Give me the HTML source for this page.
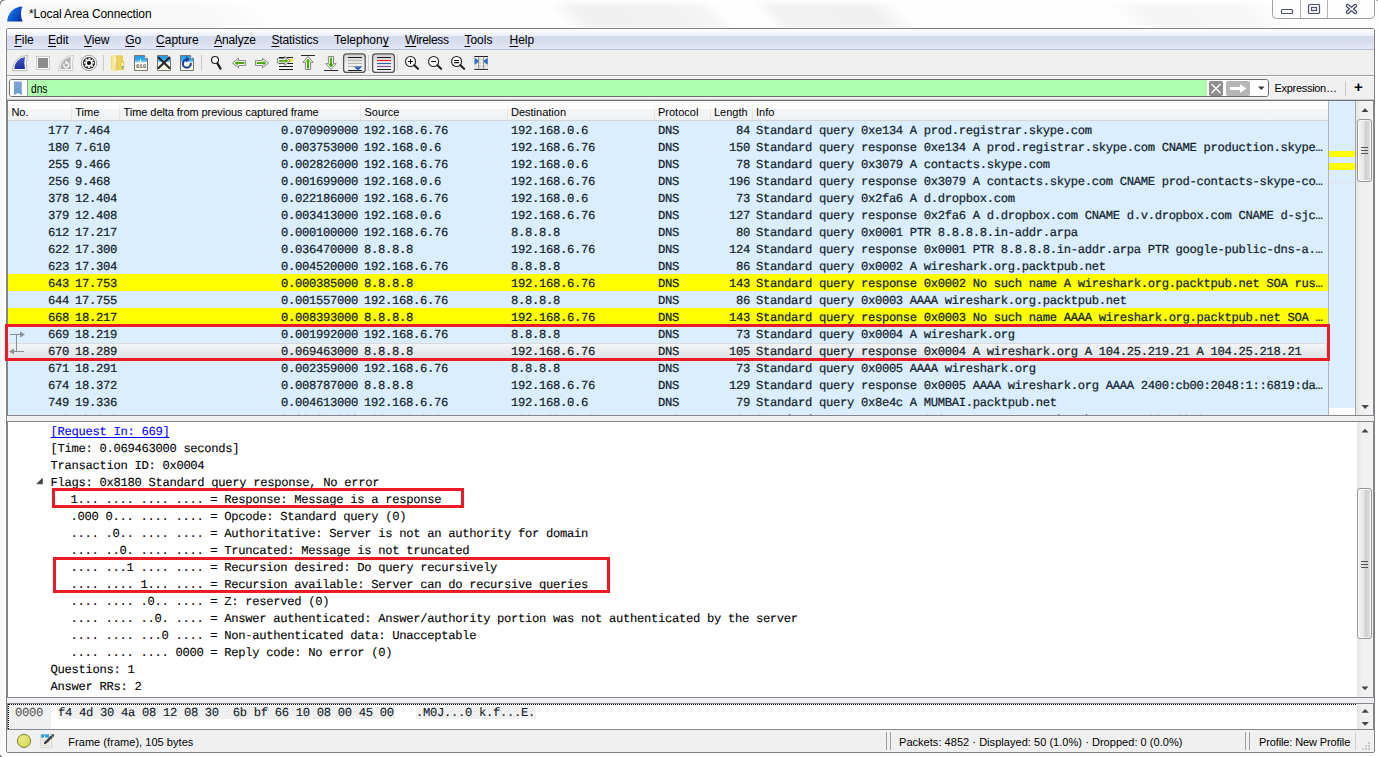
<!DOCTYPE html><html><head><meta charset="utf-8"><title>*Local Area Connection</title><style>
html,body{margin:0;padding:0}
body{width:1378px;height:757px;overflow:hidden;background:#fcfcfc;font-family:"Liberation Sans",sans-serif;font-size:11px;color:#000}
#win{position:absolute;left:0;top:0;width:1378px;height:757px;overflow:hidden;background:linear-gradient(90deg,#f6f6f6 0,#fafafa 4px,#fff 6px,#fff 100%)}
#win div,#win span,#win svg{position:absolute}
#titlebar{left:0;top:0;width:1378px;height:28px;background:#fefefe;overflow:hidden}
#streaks{left:-40px;top:0;width:1460px;height:28px;transform:skewX(45deg);transform-origin:0 0;background:linear-gradient(90deg,rgba(0,0,0,.022) 0,rgba(0,0,0,.022) 230px,rgba(0,0,0,0) 300px,rgba(0,0,0,0) 583px,rgba(0,0,0,.055) 608px,rgba(0,0,0,.05) 700px,rgba(0,0,0,.03) 735px,rgba(0,0,0,0) 752px,rgba(0,0,0,0) 785px,rgba(0,0,0,.05) 805px,rgba(0,0,0,.055) 900px,rgba(0,0,0,0) 935px,rgba(0,0,0,0) 1140px,rgba(0,0,0,.035) 1175px,rgba(0,0,0,.03) 1270px,rgba(0,0,0,0) 1310px)}
#tfade{left:0;top:0;width:1378px;height:8px;background:linear-gradient(rgba(255,255,255,.9),rgba(255,255,255,0))}
#corners{left:-1px;top:-1px;width:1378px;height:757px;border:1px solid #3c3c3c;border-radius:7px 3px 0 4px;pointer-events:none}
#title{left:28.9px;top:6.5px;letter-spacing:-0.13px;font-size:12px;line-height:15px;white-space:pre;color:#000}
#frame{left:6px;top:28px;width:1369px;height:725px;border:1px solid #828282;border-radius:2px;box-sizing:border-box;background:#f0f0f0;box-shadow:0 0 0 1px rgba(255,255,255,.9)}
#menubar{left:7px;top:29px;width:1367px;height:20px;background:linear-gradient(#ffffff 0,#eceff9 34%,#d5daec 36%,#d8ddee 60%,#e2e6f5 100%);border-bottom:1px solid #b8bfd6}
.mi{top:33px;margin-left:-0.8px;font-size:12px;line-height:14px;white-space:pre;color:#000}
.mi u{text-decoration:underline;text-underline-offset:1.5px;text-decoration-thickness:1px}
#toolbar{left:7px;top:50px;width:1367px;height:25px;background:#f0f0f0;border-bottom:1px solid #a0a0a0}
#tbhl{left:7px;top:76px;width:1367px;height:1px;background:#fafafa}
#filterbox{left:9px;top:79px;width:1258px;height:16px;border:1px solid #6e6e6e;border-radius:3px;background:linear-gradient(90deg,#fff 17px,#afffaf 17px,#afffaf 1197px,#fff 1197px);overflow:hidden}
#fbm{left:0;top:0;width:17px;height:16px;background:#fff;border-right:1px solid #9a9a9a}
#ftext{left:21px;top:1.500px;font-size:12.300px;line-height:15px;white-space:pre;transform:scaleX(.83);transform-origin:0 0}
#fright{left:1197px;top:0;width:61px;height:16px;background:#fff}
#fx{left:1209px;top:81px;width:14px;height:15px;background:#8e8e8e;border-radius:2px}
#fgo{left:1226px;top:81px;width:24px;height:15px;background:#b6b6b6;border-radius:2px}
#expr{left:1274.5px;top:81px;font-size:11px;letter-spacing:-0.3px;line-height:14px;white-space:pre}
#fsep{left:1345px;top:81px;width:1px;height:15px;background:#c8c8c8}
#fplus{left:1354px;top:78px;font-size:15px;font-weight:bold;line-height:18px}
/* packet list */
#plwrap{left:7px;top:100px;width:1367px;height:316px;background:#daeeff;border:1px solid #828790;border-top-color:#6d7278;box-shadow:0 -1px 0 #c9cbce;box-sizing:border-box}
#phead{left:8px;top:101px;width:1320px;height:19px;background:linear-gradient(#fff 0,#fff 42%,#f4f5f7 43%,#f1f2f4 100%);border-bottom:1px solid #d5d5d5}
.hc{top:106px;font-size:11px;line-height:13px;white-space:pre}
.hs{top:101px;width:1px;height:19px;background:linear-gradient(#fafafa,#dcdcdc)}
#plist{left:8px;top:121px;width:1320px;height:294px;overflow:hidden;background:#daeeff}
.row{left:0;width:1320px;height:17px;background:#daeeff}
.row.yel{background:#ffff00}
.row.sel{background:#daeeff}
.row.sel::before{content:"";position:absolute;left:0;top:1px;width:1319px;height:16px;background:linear-gradient(#f5f6f8,#dde0e5);box-shadow:inset 0 0 0 1px #d9dbdf;border-radius:2px}
.c,.dl2,.hx{font-family:"Liberation Mono",monospace;font-size:12.2px;letter-spacing:-0.32px;line-height:17px;white-space:pre;top:2px;color:#10222a;-webkit-text-stroke-width:0.22px;text-rendering:geometricPrecision}
.no{left:0;width:61px;text-align:right}
.tm{left:67px}
.dl{left:111px;width:239px;text-align:right}
.sr{left:356px}
.ds{left:503px}
.pr{left:650px}
.ln{left:702px;width:40px;text-align:right}
.inf{left:748px}
#mm{left:1328px;top:101px;width:28px;height:314px;background:#daeeff;border-left:1px solid #b4b4b4;border-right:1px solid #a8a8a8;box-sizing:border-box}
.mmy{left:1329px;width:26px;background:#ffff00}
.sb{left:1356px;width:17px;background:linear-gradient(90deg,#e4e4e4,#f0f0f0 30%,#f2f2f2)}
.thumb{left:1357px;width:15px;border:1px solid #979797;border-radius:3px;box-sizing:border-box;background:linear-gradient(90deg,#f4f4f4 0,#e6e6e6 45%,#cfcfcf 55%,#dedede 100%);box-shadow:inset 0 0 0 1px rgba(255,255,255,.7)}
/* detail */
#dwrap{left:7px;top:421px;width:1367px;height:277px;background:#fff;border:1px solid #828790;box-sizing:border-box}
#detail{left:8px;top:422px;width:1348px;height:275px;overflow:hidden;background:#fff}
.dl2{color:#000;-webkit-text-stroke-width:0.1px}
.hx{-webkit-text-stroke-width:0.12px}
.k{position:static!important}
.lnk{position:static!important;color:#0000ff;text-decoration:underline;text-underline-offset:2px;text-decoration-skip-ink:none;text-decoration-thickness:1px}
/* hex */
#hwrap{left:7px;top:703px;width:1367px;height:27px;background:#fff;border:1px solid #828790;box-sizing:border-box}
#hfocus{left:8px;top:704px;width:1347px;height:24px;border:1px dotted #000;border-right:none;border-bottom:none}
#hoff{left:9px;top:705px;width:42px;height:24px;background:#f0f0f0}
.hx{top:705px;line-height:16px}
#status{left:7px;top:730px;width:1367px;height:22px;background:#f0f0f0}
.st{top:736px;font-size:11px;letter-spacing:0.04px;line-height:13px;white-space:pre}
.ssep{top:732px;width:1px;height:18px;background:#a0a0a0}

.lastshift .c{-webkit-text-stroke-width:0;top:2.3px}

</style></head><body><div id="win">
<div id="titlebar"><div id="streaks"></div><div id="tfade"></div></div><div id="corners"></div>
<svg id="appicon" style="left:6px;top:5px" width="19" height="18" viewBox="6 5 19 18"><defs><linearGradient id="gfin" x1="0" y1="0" x2="1" y2="0.6"><stop offset="0" stop-color="#3a88ee"/><stop offset=".5" stop-color="#0c60d8"/><stop offset="1" stop-color="#0a34aa"/></linearGradient></defs><path d="M7.200,21.600 A15.300,15.300 0 0 1 22.400,6.500 Q19.300,14 22.700,21.600 Z" fill="url(#gfin)"/></svg>
<div id="title">*Local Area Connection</div>
<svg id="winbtns" style="left:1270px;top:0" width="108" height="22" viewBox="1270 0 108 22">
 <path d="M1272.5,-1 V14.5 Q1272.5,18.5 1276.5,18.5 H1370.5 Q1374.5,18.5 1374.5,14.5 V-1" fill="#fdfdfd" stroke="#9c9c9c" stroke-width="1"/>
 <path d="M1300.5,0 V18 M1327.5,0 V18" stroke="#b4b4b4" stroke-width="1"/>
 <rect x="1281.5" y="9.500" width="11" height="4" rx="1" fill="#fff" stroke="#4d5166" stroke-width="1.2"/>
 <rect x="1308.500" y="4.500" width="11" height="9" rx="1" fill="#fff" stroke="#4d5166" stroke-width="1.2"/>
 <rect x="1311.500" y="7.500" width="5" height="3" fill="#fff" stroke="#4d5166" stroke-width="1.2"/>
 <path d="M1347.700,5.700 L1355.300,12.300 M1355.300,5.700 L1347.700,12.300" stroke="#454a64" stroke-width="3.800" stroke-linecap="round" fill="none"/>
 <path d="M1347.700,5.700 L1355.300,12.300 M1355.300,5.700 L1347.700,12.300" stroke="#f4f4f6" stroke-width="1.500" stroke-linecap="round" fill="none"/>
</svg>
<div id="frame"></div>
<div id="menubar"></div>
<div class="mi" style="left:15.200px"><u>F</u>ile</div>
<div class="mi" style="left:48.800px"><u>E</u>dit</div>
<div class="mi" style="left:84.900px;letter-spacing:-0.2px"><u>V</u>iew</div>
<div class="mi" style="left:126px"><u>G</u>o</div>
<div class="mi" style="left:156.900px"><u>C</u>apture</div>
<div class="mi" style="left:215px;letter-spacing:-0.15px"><u>A</u>nalyze</div>
<div class="mi" style="left:272.200px;letter-spacing:-0.1px"><u>S</u>tatistics</div>
<div class="mi" style="left:334.800px">Telephon<u>y</u></div>
<div class="mi" style="left:405.900px;letter-spacing:-0.3px"><u>W</u>ireless</div>
<div class="mi" style="left:465.200px"><u>T</u>ools</div>
<div class="mi" style="left:510.300px"><u>H</u>elp</div>
<div id="toolbar"></div>
<div id="tbhl"></div>
<svg id="tbicons" style="left:0;top:50px" width="500" height="26" viewBox="0 50 500 26">
 <defs>
  <linearGradient id="gblue" x1="0" y1="0" x2="0.3" y2="1"><stop offset="0" stop-color="#4566d6"/><stop offset="1" stop-color="#1a2fa4"/></linearGradient>
  <linearGradient id="gfold" x1="0" y1="0" x2="1" y2="0"><stop offset="0" stop-color="#d2b345"/><stop offset=".25" stop-color="#efd568"/><stop offset="1" stop-color="#e7c64e"/></linearGradient><linearGradient id="gfold2" x1="0" y1="0" x2="1" y2="0"><stop offset="0" stop-color="#edd66e"/><stop offset=".4" stop-color="#f8eea6"/><stop offset="1" stop-color="#efd872"/></linearGradient>
  <linearGradient id="gdoc" x1="0" y1="0" x2="0" y2="1"><stop offset="0" stop-color="#1d9cec"/><stop offset=".3" stop-color="#3aa8ee"/><stop offset=".42" stop-color="#8fcdf4"/><stop offset=".48" stop-color="#f8f8f0"/><stop offset="1" stop-color="#fafae6"/></linearGradient>
  <linearGradient id="ggrn" x1="0" y1="0" x2="0" y2="1"><stop offset="0" stop-color="#5cba10"/><stop offset="1" stop-color="#3c9c00"/></linearGradient>
  <linearGradient id="gbtn" x1="0" y1="0" x2="0" y2="1"><stop offset="0" stop-color="#cfcfcf"/><stop offset=".5" stop-color="#ececec"/><stop offset="1" stop-color="#f6f6f6"/></linearGradient>
 </defs>
 <!-- start capture fin -->
 <path d="M12.300,70.600 A15.400,15.400 0 0 1 27.600,55.300 Q25.400,62.500 27,70.600 Z" fill="#fbfbfb" stroke="#b4b4ae" stroke-width=".9" stroke-linejoin="round"/>
 <path d="M14.300,69.100 A12.300,12.300 0 0 1 25,56.900 Q23.500,63 25,69.100 Z" fill="url(#gblue)"/>
 <!-- stop -->
 <rect x="36.400" y="56.400" width="13.200" height="13.200" fill="#fafafa" stroke="#c4c4c4" stroke-width=".8"/>
 <rect x="38" y="58" width="10" height="10" fill="#8c8c8c"/>
 <!-- restart fin grey -->
 <path d="M58.300,70.600 A15.400,15.400 0 0 1 73.600,55.300 Q71.400,62.500 73,70.600 Z" fill="#f6f6f6" stroke="#c6c6c6" stroke-width=".9" stroke-linejoin="round"/>
 <path d="M60.300,69.100 A12.300,12.300 0 0 1 71,56.900 Q69.500,63 71,69.100 Z" fill="#b2b2b2"/>
 <path d="M64.200,63.600 A2.500,2.500 0 1 0 67.400,62.900" fill="none" stroke="#fafafa" stroke-width="1.300"/>
 <path d="M65.400,60.600 L68.400,62.600 L65.400,64.400 Z" fill="#fafafa"/>
 <!-- options gear -->
 <circle cx="89" cy="63" r="7.700" fill="#fdfdfd" stroke="#8c8c8c" stroke-width=".8"/>
 <circle cx="89" cy="63" r="6.100" fill="#2b2b2b"/>
 <circle cx="89" cy="63" r="4.300" fill="none" stroke="#f6f6f6" stroke-width="1.700" stroke-dasharray="1.800 1.577" transform="rotate(-14 89 63)"/>
 <circle cx="89" cy="63" r="3.700" fill="#f6f6f6"/>
 <circle cx="89" cy="63" r="2.100" fill="#0c0c0c"/>
 <path d="M103.500,55 V71" stroke="#c9c9c9" stroke-width="1"/>
 <!-- open folder -->
 <path d="M116.400,55.300 H122.300 Q123,55.300 123,56 V61.200 H123.600 Q124.200,61.200 124.200,61.900 V69.400 Q124.200,70 123.600,70 H116.400 Z" fill="url(#gfold)"/>
 <path d="M111.600,55.200 H116 Q116.600,55.200 116.600,55.800 V70.300 Q116.600,70.900 116,70.900 L114,70.900 Q111,70.600 111,69.600 V55.800 Q111,55.200 111.600,55.200 Z" fill="url(#gfold2)"/>
 <rect x="114.500" y="56.300" width="1.100" height="6.500" fill="#fffef0" opacity=".9"/>
 <rect x="121.900" y="63" width="1.300" height="3.200" fill="#fff"/><rect x="121.900" y="66.200" width="1.300" height="1.800" fill="#2aa0e6"/>
 <!-- save doc -->
 <g id="doc1"><path d="M134.500,55.500 H144.500 L147.500,58.500 V70.500 H134.500 Z" fill="url(#gdoc)" stroke="#77776f" stroke-width="1"/><path d="M144.500,55.500 V58.500 H147.500" fill="#fff" stroke="#75756c" stroke-width=".7"/></g>
 <path d="M139.500,61.800 L140.600,58.200 L141.200,61.800 Z" fill="#fff"/><text x="135.900" y="68.200" font-family="Liberation Mono,monospace" font-weight="bold" font-size="5.800" fill="#5e5e5e" textLength="10.200" lengthAdjust="spacingAndGlyphs">010</text>
 <!-- close doc -->
 <g transform="translate(23,0)"><path d="M134.500,55.500 H144.500 L147.500,58.500 V70.500 H134.500 Z" fill="url(#gdoc)" stroke="#77776f" stroke-width="1"/><path d="M144.500,55.500 V58.500 H147.500" fill="#fff" stroke="#75756c" stroke-width=".7"/></g>
 <path d="M158.600,57.500 L169.400,67.900 M169.400,57.500 L158.600,67.900" stroke="#262626" stroke-width="2.100" stroke-linecap="round"/>
 <!-- reload doc -->
 <g transform="translate(46,0)"><path d="M134.500,55.500 H144.500 L147.500,58.500 V70.500 H134.500 Z" fill="url(#gdoc)" stroke="#77776f" stroke-width="1"/><path d="M144.500,55.500 V58.500 H147.500" fill="#fff" stroke="#75756c" stroke-width=".7"/></g>
 <path d="M186.600,59.600 A4,4 0 1 0 190.800,63.700" fill="none" stroke="#1b4394" stroke-width="2.100" stroke-linecap="round"/>
 <path d="M186.200,56.700 L189.600,59.300 L186.200,61.900 Z" fill="#1b4394" stroke="#1b4394" stroke-width=".5" stroke-linejoin="round"/>
 <path d="M201.500,55 V71" stroke="#c9c9c9" stroke-width="1"/>
 <!-- find -->
 <circle cx="215" cy="60" r="3.500" fill="#f7f7f7" stroke="#222" stroke-width="1.200"/>
 <path d="M217.400,63.400 L220.500,68.600" stroke="#222" stroke-width="2.300" stroke-linecap="round"/>
 <!-- back -->
 <path d="M232.500,63 L238.500,58.300 V60.600 H245.600 V65.400 H238.500 V67.700 Z" fill="#fff" stroke="#838383" stroke-width="1" stroke-linejoin="round"/>
 <path d="M234.600,63 L237.600,60.600 V62 H244.400 V64 H237.600 V65.400 Z" fill="url(#ggrn)"/>
 <!-- forward -->
 <path d="M268.500,63 L262.500,58.300 V60.600 H255.400 V65.400 H262.500 V67.700 Z" fill="#fff" stroke="#838383" stroke-width="1" stroke-linejoin="round"/>
 <path d="M266.400,63 L263.400,60.600 V62 H256.600 V64 H263.400 V65.400 Z" fill="url(#ggrn)"/>
 <!-- goto -->
 <path d="M279,57.500 H293 M279,63.500 H293 M279,66.500 H293 M279,69.500 H293" stroke="#1a1a1a" stroke-width="1"/>
 <rect x="288" y="59" width="5" height="2.800" fill="#ffe030"/>
 <path d="M290.400,60.800 L284.800,56.400 V58.500 H277.400 V63.100 H284.800 V65.200 Z" fill="#fff" stroke="#838383" stroke-width="1" stroke-linejoin="round"/>
 <path d="M288.400,60.800 L285.600,58.600 V59.900 H278.800 V61.700 H285.600 V63 Z" fill="url(#ggrn)"/>
 <!-- first -->
 <path d="M301,55.500 H315" stroke="#2a2a2a" stroke-width="1"/>
 <path d="M308,56.500 L313.200,62.300 H310.600 V69.500 H305.400 V62.300 H302.800 Z" fill="#fff" stroke="#838383" stroke-width="1" stroke-linejoin="round"/>
 <path d="M308,58.600 L310.800,61.800 H309.100 V68.400 H306.900 V61.800 H305.200 Z" fill="url(#ggrn)"/>
 <!-- last -->
 <path d="M324,70.500 H338" stroke="#2a2a2a" stroke-width="1"/>
 <path d="M331,69.500 L336.200,63.700 H333.600 V56.500 H328.400 V63.700 H325.800 Z" fill="#fff" stroke="#838383" stroke-width="1" stroke-linejoin="round"/>
 <path d="M331,67.400 L333.800,64.200 H332.100 V57.600 H329.900 V64.200 H328.200 Z" fill="url(#ggrn)"/>
 <!-- autoscroll (pressed) -->
 <rect x="343.600" y="53.800" width="21.600" height="18.600" rx="3" fill="url(#gbtn)" stroke="#555" stroke-width="1.300"/>
 <path d="M348,57.500 H362" stroke="#1a1a1a" stroke-width="1"/>
 <path d="M348,60.500 H362 M348,63.500 H362 M348,66.500 H362" stroke="#b4b8a8" stroke-width="1"/>
 <path d="M348,70.500 H362" stroke="#1a1a1a" stroke-width="1"/>
 <path d="M353.800,66.400 H362.200 L358,70.800 Z" fill="#3568b2"/>
 <path d="M368.500,55 V71" stroke="#d0d0d0" stroke-width="1"/>
 <!-- colorize (pressed) -->
 <rect x="372.600" y="53.800" width="21.800" height="18.600" rx="3" fill="url(#gbtn)" stroke="#555" stroke-width="1.300"/>
 <path d="M377,57.500 H391 M377,69.500 H391" stroke="#1a1a1a" stroke-width="1"/>
 <path d="M377,60.500 H391" stroke="#ee1c24" stroke-width="1.100"/>
 <path d="M377,63.500 H391" stroke="#2f62b4" stroke-width="1.100"/>
 <path d="M377,66.500 H391" stroke="#7a4a8e" stroke-width="1.100"/>
 <path d="M397.500,55 V71" stroke="#d0d0d0" stroke-width="1"/>
 <!-- zoom in -->
 <g id="zm"><circle cx="410.500" cy="61.500" r="5" fill="#fcfcfc" stroke="#222" stroke-width="1.100"/><path d="M414.300,65.300 L418,68.800" stroke="#222" stroke-width="2.200" stroke-linecap="round"/></g>
 <path d="M408,61.500 H413 M410.500,59 V64" stroke="#111" stroke-width="1.100"/>
 <g transform="translate(23.100,0)"><circle cx="410.500" cy="61.500" r="5" fill="#fcfcfc" stroke="#222" stroke-width="1.100"/><path d="M414.300,65.300 L418,68.800" stroke="#222" stroke-width="2.200" stroke-linecap="round"/></g>
 <path d="M431.100,61.500 H436.100" stroke="#111" stroke-width="1.100"/>
 <g transform="translate(46.100,0)"><circle cx="410.500" cy="61.500" r="5" fill="#fcfcfc" stroke="#222" stroke-width="1.100"/><path d="M414.300,65.300 L418,68.800" stroke="#222" stroke-width="2.200" stroke-linecap="round"/></g>
 <path d="M454.100,60.500 H459.100 M454.100,62.600 H459.100" stroke="#111" stroke-width="1.100"/>
 <!-- resize columns -->
 <path d="M474.300,56.500 H488 M474.300,69.400 H488" stroke="#1a1a1a" stroke-width="1"/>
 <path d="M474.300,59.800 H488 M474.300,63 H488 M474.300,66.200 H488" stroke="#c4c8b8" stroke-width=".8"/>
 <path d="M478.700,56.500 V69.400 M483.600,56.500 V69.400" stroke="#8a8a80" stroke-width=".9"/>
 <path d="M474.500,57.600 L479.100,61.300 L474.500,65 Z M487.800,57.600 L483.200,61.300 L487.800,65 Z" fill="#2f6fc0"/>
</svg>
<!-- filter bar -->
<div id="filterbox"><div id="fbm"></div><div id="ftext">dns</div><div id="fright"></div></div>
<svg style="left:10px;top:79px" width="20" height="18" viewBox="0 0 20 18"><defs><linearGradient id="gbm" x1="0" y1="0" x2="0" y2="1"><stop offset="0" stop-color="#7ba7da"/><stop offset="1" stop-color="#6c9bd0"/></linearGradient></defs><path d="M4,2.500 H11.800 V16 L7.900,13.900 L4,16 Z" fill="url(#gbm)"/></svg>
<div id="fx"></div><div id="fgo"></div>
<svg style="left:1206px;top:78px" width="64" height="20" viewBox="1206 78 64 20">
 <path d="M1211.500,84 L1220.500,93 M1220.500,84 L1211.500,93" stroke="#fff" stroke-width="1.300"/>
 <path d="M1230,87 H1240 V84 L1246.500,88.500 L1240,93 V90 H1230 Z" fill="#fff"/>
 <path d="M1258,86.500 H1264.600 L1261.300,90 Z" fill="#3c3c3c"/>
</svg>
<div id="expr">Expression…</div>
<div id="fsep"></div>
<div id="fplus">+</div>
<!-- packet list -->
<div id="plwrap"></div>
<div id="phead"></div>
<div class="hc" style="left:11.400px">No.</div>
<div class="hc" style="left:75.300px">Time</div>
<div class="hc" style="left:123.600px;letter-spacing:-0.07px">Time delta from previous captured frame</div>
<div class="hc" style="left:364.500px">Source</div>
<div class="hc" style="left:511px">Destination</div>
<div class="hc" style="left:658px">Protocol</div>
<div class="hc" style="left:714px">Length</div>
<div class="hc" style="left:756px">Info</div>
<div class="hs" style="left:71px"></div><div class="hs" style="left:119px"></div><div class="hs" style="left:360px"></div><div class="hs" style="left:507px"></div><div class="hs" style="left:654px"></div><div class="hs" style="left:710px"></div><div class="hs" style="left:752px"></div>

<div id="plist">
<div class="row" style="top:0px"><span class="c no">177</span><span class="c tm">7.464</span><span class="c dl">0.070909000</span><span class="c sr">192.168.6.76</span><span class="c ds">192.168.0.6</span><span class="c pr">DNS</span><span class="c ln">84</span><span class="c inf">Standard query 0xe134 A prod.registrar.skype.com</span></div>
<div class="row" style="top:17px"><span class="c no">180</span><span class="c tm">7.610</span><span class="c dl">0.003753000</span><span class="c sr">192.168.0.6</span><span class="c ds">192.168.6.76</span><span class="c pr">DNS</span><span class="c ln">150</span><span class="c inf">Standard query response 0xe134 A prod.registrar.skype.com CNAME production.skype…</span></div>
<div class="row" style="top:34px"><span class="c no">255</span><span class="c tm">9.466</span><span class="c dl">0.002826000</span><span class="c sr">192.168.6.76</span><span class="c ds">192.168.0.6</span><span class="c pr">DNS</span><span class="c ln">78</span><span class="c inf">Standard query 0x3079 A contacts.skype.com</span></div>
<div class="row" style="top:51px"><span class="c no">256</span><span class="c tm">9.468</span><span class="c dl">0.001699000</span><span class="c sr">192.168.0.6</span><span class="c ds">192.168.6.76</span><span class="c pr">DNS</span><span class="c ln">196</span><span class="c inf">Standard query response 0x3079 A contacts.skype.com CNAME prod-contacts-skype-co…</span></div>
<div class="row" style="top:68px"><span class="c no">378</span><span class="c tm">12.404</span><span class="c dl">0.022186000</span><span class="c sr">192.168.6.76</span><span class="c ds">192.168.0.6</span><span class="c pr">DNS</span><span class="c ln">73</span><span class="c inf">Standard query 0x2fa6 A d.dropbox.com</span></div>
<div class="row" style="top:85px"><span class="c no">379</span><span class="c tm">12.408</span><span class="c dl">0.003413000</span><span class="c sr">192.168.0.6</span><span class="c ds">192.168.6.76</span><span class="c pr">DNS</span><span class="c ln">127</span><span class="c inf">Standard query response 0x2fa6 A d.dropbox.com CNAME d.v.dropbox.com CNAME d-sjc…</span></div>
<div class="row" style="top:102px"><span class="c no">612</span><span class="c tm">17.217</span><span class="c dl">0.000100000</span><span class="c sr">192.168.6.76</span><span class="c ds">8.8.8.8</span><span class="c pr">DNS</span><span class="c ln">80</span><span class="c inf">Standard query 0x0001 PTR 8.8.8.8.in-addr.arpa</span></div>
<div class="row" style="top:119px"><span class="c no">622</span><span class="c tm">17.300</span><span class="c dl">0.036470000</span><span class="c sr">8.8.8.8</span><span class="c ds">192.168.6.76</span><span class="c pr">DNS</span><span class="c ln">124</span><span class="c inf">Standard query response 0x0001 PTR 8.8.8.8.in-addr.arpa PTR google-public-dns-a.…</span></div>
<div class="row" style="top:136px"><span class="c no">623</span><span class="c tm">17.304</span><span class="c dl">0.004520000</span><span class="c sr">192.168.6.76</span><span class="c ds">8.8.8.8</span><span class="c pr">DNS</span><span class="c ln">86</span><span class="c inf">Standard query 0x0002 A wireshark.org.packtpub.net</span></div>
<div class="row yel" style="top:153px"><span class="c no">643</span><span class="c tm">17.753</span><span class="c dl">0.000385000</span><span class="c sr">8.8.8.8</span><span class="c ds">192.168.6.76</span><span class="c pr">DNS</span><span class="c ln">143</span><span class="c inf">Standard query response 0x0002 No such name A wireshark.org.packtpub.net SOA rus…</span></div>
<div class="row" style="top:170px"><span class="c no">644</span><span class="c tm">17.755</span><span class="c dl">0.001557000</span><span class="c sr">192.168.6.76</span><span class="c ds">8.8.8.8</span><span class="c pr">DNS</span><span class="c ln">86</span><span class="c inf">Standard query 0x0003 AAAA wireshark.org.packtpub.net</span></div>
<div class="row yel" style="top:187px"><span class="c no">668</span><span class="c tm">18.217</span><span class="c dl">0.008393000</span><span class="c sr">8.8.8.8</span><span class="c ds">192.168.6.76</span><span class="c pr">DNS</span><span class="c ln">143</span><span class="c inf">Standard query response 0x0003 No such name AAAA wireshark.org.packtpub.net SOA …</span></div>
<div class="row" style="top:204px"><span class="c no">669</span><span class="c tm">18.219</span><span class="c dl">0.001992000</span><span class="c sr">192.168.6.76</span><span class="c ds">8.8.8.8</span><span class="c pr">DNS</span><span class="c ln">73</span><span class="c inf">Standard query 0x0004 A wireshark.org</span></div>
<div class="row sel" style="top:221px"><span class="c no">670</span><span class="c tm">18.289</span><span class="c dl">0.069463000</span><span class="c sr">8.8.8.8</span><span class="c ds">192.168.6.76</span><span class="c pr">DNS</span><span class="c ln">105</span><span class="c inf">Standard query response 0x0004 A wireshark.org A 104.25.219.21 A 104.25.218.21</span></div>
<div class="row" style="top:238px"><span class="c no">671</span><span class="c tm">18.291</span><span class="c dl">0.002359000</span><span class="c sr">192.168.6.76</span><span class="c ds">8.8.8.8</span><span class="c pr">DNS</span><span class="c ln">73</span><span class="c inf">Standard query 0x0005 AAAA wireshark.org</span></div>
<div class="row" style="top:255px"><span class="c no">674</span><span class="c tm">18.372</span><span class="c dl">0.008787000</span><span class="c sr">8.8.8.8</span><span class="c ds">192.168.6.76</span><span class="c pr">DNS</span><span class="c ln">129</span><span class="c inf">Standard query response 0x0005 AAAA wireshark.org AAAA 2400:cb00:2048:1::6819:da…</span></div>
<div class="row" style="top:272px"><span class="c no">749</span><span class="c tm">19.336</span><span class="c dl">0.004613000</span><span class="c sr">192.168.6.76</span><span class="c ds">192.168.0.6</span><span class="c pr">DNS</span><span class="c ln">79</span><span class="c inf">Standard query 0x8e4c A MUMBAI.packtpub.net</span></div>
<div class="row lastshift" style="top:289px"><span class="c no">750</span><span class="c tm">19.340</span><span class="c dl">0.004041000</span><span class="c sr">192.168.0.6</span><span class="c ds">192.168.6.76</span><span class="c pr">DNS</span><span class="c ln">95</span><span class="c inf">Standard query response 0x8e4c A MUMBAI.packtpub.net A 192.168.0.11</span></div>
</div>
<div id="dwrap"></div><div id="detail">
<div class="dl2" style="top:2px;left:42.5px"><span class="lnk">[Request In: 669]</span></div>
<div class="dl2" style="top:19px;left:42.5px">[Time: 0.069463000 seconds]</div>
<div class="dl2" style="top:36px;left:42.5px">Transaction ID: 0x0004</div>
<div class="dl2" style="top:53px;left:42.5px">Flags: 0x8180 Standard query response, No error</div>
<div class="dl2" style="top:70px;left:62.5px">1... .... .... .... = Response: Message is a response</div>
<div class="dl2" style="top:87px;left:62.5px">.000 0... .... .... = Opcode: Standard query (0)</div>
<div class="dl2" style="top:104px;left:62.5px">.... .0.. .... .... = Authoritative: Server is not an authority for domain</div>
<div class="dl2" style="top:121px;left:62.5px">.... ..0. .... .... = Truncated: Message is not truncated</div>
<div class="dl2" style="top:138px;left:62.5px">.... ...1 .... .... = Recursion desired: Do query recursively</div>
<div class="dl2" style="top:155px;left:62.5px">.... .... 1... .... = Recursion available: Server can do recursive queries</div>
<div class="dl2" style="top:172px;left:62.5px">.... .... .0.. .... = Z: reserved (0)</div>
<div class="dl2" style="top:189px;left:62.5px">.... .... ..0. .... = Answer authenticated: Answer/authority portion was not authenticated by the server</div>
<div class="dl2" style="top:206px;left:62.5px">.... .... ...0 .... = Non-authenticated data<span class="k">:</span> Unacceptable</div>
<div class="dl2" style="top:223px;left:62.5px">.... .... .... 0000 = Reply code: No error (0)</div>
<div class="dl2" style="top:240px;left:42.5px">Questions: 1</div>
<div class="dl2" style="top:257px;left:42.5px">Answer RRs: 2</div>
</div>
<!-- related packet arrows -->
<svg style="left:8px;top:325px" width="24" height="34" viewBox="8 325 24 34">
 <path d="M10,334.500 H21 M16.500,334.500 V351.500 M13,351.500 H24" stroke="#8a9196" stroke-width="1" fill="none"/>
 <path d="M20,331.500 L25,334.500 L20,337.500 Z M14,348.500 L9,351.500 L14,354.500 Z" fill="#8a9196"/>
</svg>
<!-- minimap -->
<div id="mm"></div>
<div class="mmy" style="top:151px;height:6px"></div>
<div class="mmy" style="top:163px;height:7px"></div>
<div class="mmy" style="top:182px;height:1px;background:#e4e4e4"></div>
<div class="mmy" style="top:408px;height:7px;background:#fff"></div>
<!-- packet list scrollbar -->
<div class="sb" style="top:101px;height:314px"></div>
<div class="thumb" style="top:119px;height:63px"></div>
<svg style="left:1356px;top:101px" width="17" height="314" viewBox="1356 101 17 314">
 <path d="M1361.500,112 L1365,108.300 L1368.500,112 Z" fill="#454545"/>
 <path d="M1361.500,405 L1365.200,408.900 L1368.900,405 Z" fill="#454545"/>
 <path d="M1361,147.500 H1368 M1361,150.500 H1368 M1361,153.500 H1368" stroke="#555" stroke-width="1"/>
</svg>
<!-- detail pane -->
<div class="sb" style="top:422px;height:275px;left:1357px;width:16px"></div>
<div class="thumb" style="top:488px;height:151px"></div>
<svg style="left:1356px;top:422px" width="17" height="275" viewBox="1356 422 17 275">
 <path d="M1361.500,432.500 L1365,428.800 L1368.500,432.500 Z" fill="#454545"/>
 <path d="M1361.500,686.500 L1365,690.200 L1368.500,686.500 Z" fill="#454545"/>
 <path d="M1361,561.500 H1368 M1361,564.500 H1368 M1361,567.500 H1368" stroke="#555" stroke-width="1"/>
</svg>
<svg style="left:34.500px;top:475px" width="10" height="12" viewBox="0 0 10 12"><path d="M7.300,3.400 V8.800 H1.900 Z" fill="#484848" stroke="#262626" stroke-width=".7" stroke-linejoin="round"/></svg>
<!-- hex -->
<div id="hwrap"></div>
<div id="hoff"></div>
<div id="hsel" style="left:58px;top:706px;width:337px;height:13px;background:#f0f0f0"></div>
<div id="hsel2" style="left:416px;top:706px;width:120px;height:13px;background:#f0f0f0"></div>
<div class="hx" style="left:15px;color:#5c5c5c">0000</div>
<div class="hx" style="left:58px">f4 4d 30 4a 08 12 08 30  6b bf 66 10 08 00 45 00</div>
<div class="hx" style="left:416px">.M0J...0 k.f...E.</div>
<div id="hfocus"></div>
<div class="sb" style="top:704px;height:25px;left:1357px;width:16px"></div>
<svg style="left:1356px;top:704px" width="17" height="25" viewBox="1356 704 17 25">
 <path d="M1361.500,712.800 L1365.200,708.900 L1368.900,712.800 Z" fill="#454545"/>
 <path d="M1361.500,721.900 L1365.200,725.800 L1368.900,721.900 Z" fill="#454545"/>
</svg>
<!-- status -->
<div id="status"></div>
<svg style="left:14px;top:732px" width="44" height="18" viewBox="14 732 44 18">
 <defs><radialGradient id="gy" cx=".4" cy=".35" r=".7"><stop offset="0" stop-color="#e8e886"/><stop offset="1" stop-color="#d8d858"/></radialGradient></defs>
 <circle cx="24" cy="740.900" r="6.600" fill="url(#gy)" stroke="#74742a" stroke-width=".9"/>
 <rect x="40.800" y="734.300" width="10.600" height="13.100" fill="#f4f4ee" stroke="#cbcbc4" stroke-width=".7"/>
 <path d="M40.800,747.700 H51.700 V735" stroke="#d9d9d4" stroke-width=".7" fill="none"/>
 <rect x="41.100" y="734.500" width="8" height="3.200" fill="#2aa2e2"/>
 <path d="M43.700,737.900 L44.800,735.100 L45.400,737.900 Z" fill="#f8f8f4"/>
 <path d="M42.500,740.200 H46 M42.500,742.700 H45 M47.500,742.700 H50 M42.500,745.300 H49.500" stroke="#c6c6c0" stroke-width=".8"/>
 <path d="M44.100,743.900 L45.200,741.300 L52.200,734.200 Q53.200,733.800 53.900,734.600 Q54.500,735.400 53.900,736.200 L46.800,743.200 Z" fill="#454545"/>
 <path d="M44.100,743.900 L45,741.800 L46.300,743.100 Z" fill="#050505"/>
 <path d="M51.300,735.100 L53,736.900" stroke="#c8c8c8" stroke-width=".7"/>
</svg>
<div class="st" style="left:68.300px">Frame (frame), 105 bytes</div>
<div class="ssep" style="left:886px"></div><div class="ssep" style="left:890px"></div>
<div class="st" style="left:899px">Packets: 4852 · Displayed: 50 (1.0%) · Dropped: 0 (0.0%)</div>
<div class="ssep" style="left:1245px"></div><div class="ssep" style="left:1249px"></div>
<div class="ssep" style="left:1355px;background:#cfcfcf"></div>
<div class="st" style="left:1259px;letter-spacing:-0.12px">Profile: New Profile</div>
<svg style="left:1358px;top:740px" width="14" height="12" viewBox="0 0 14 12"><g fill="#c6c6c6"><rect x="10" y="2" width="2" height="2"/><rect x="7" y="5" width="2" height="2"/><rect x="10" y="5" width="2" height="2"/><rect x="4" y="8" width="2" height="2"/><rect x="7" y="8" width="2" height="2"/><rect x="10" y="8" width="2" height="2"/></g></svg>
<!-- red annotation boxes -->
<div class="red" style="left:5px;top:324px;width:1319px;height:31px;border:3px solid #ed1c24"></div>
<div class="red" style="left:52px;top:488px;width:406px;height:14px;border:3px solid #ed1c24"></div>
<div class="red" style="left:53px;top:557px;width:551px;height:30px;border:3px solid #ed1c24"></div>

</div></body></html>
